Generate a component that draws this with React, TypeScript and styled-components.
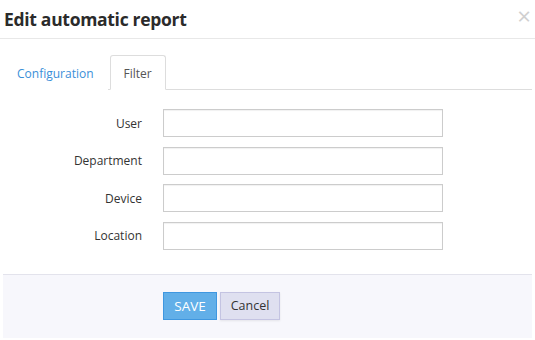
import styled, { createGlobalStyle } from "styled-components";

const FIELDS = ["User", "Department", "Device", "Location"];

const GlobalStyle = createGlobalStyle`
    body {
        margin: 0;
        background: #fff;
        font-family: "Open Sans", "Noto Sans", sans-serif;
        color: #333;
    }
`;

const App = () => {
    return (
        <Modal>
            <GlobalStyle />
            <Header>
                <Title>Edit automatic report</Title>
                <Close>×</Close>
            </Header>

            <Body>
                <TabBar>
                    <Tab>Configuration</Tab>
                    <Tab active>Filter</Tab>
                </TabBar>

                <Form>
                    {FIELDS.map((name) => (
                        <Row key={name}>
                            <Label>{name}</Label>
                            <Input type="text" />
                        </Row>
                    ))}
                </Form>

                <Footer>
                    <SaveButton>SAVE</SaveButton>
                    <CancelButton>Cancel</CancelButton>
                </Footer>
            </Body>
        </Modal>
    );
};

const Modal = styled.div`
    width: 535px;
    height: 340px;
    background: #fff;
`;
const Header = styled.header`
    height: 38px;
    display: flex;
    align-items: center;
    justify-content: space-between;
    padding: 0 4px 0 4px;
    border-bottom: 1px solid #e8e8e8;
`;
const Title = styled.h4`
    margin: 0;
    font-size: 17.5px;
    font-weight: 700;
    color: #2b2b2b;
    letter-spacing: -0.3px;
`;
const Close = styled.span`
    font-size: 24px;
    color: #d0d0d0;
    line-height: 1;
    margin-top: -7px;
`;
const Body = styled.div`
    padding: 0 3px;
`;
const TabBar = styled.nav`
    margin-top: 15px;
    height: 35px;
    display: flex;
    align-items: flex-end;
    border-bottom: 1px solid #ddd;
`;
const Tab = styled.div<{ active?: boolean }>`
    height: 35px;
    box-sizing: border-box;
    display: flex;
    align-items: center;
    padding: 2px 13px 0;
    margin-right: 2px;
    margin-bottom: -1px;
    font-size: 12px;
    color: ${(props) => (props.active ? "#555" : "#3a8fd8")};
    background: #fff;
    border: 1px solid ${(props) => (props.active ? "#ddd" : "transparent")};
    border-bottom-color: ${(props) => (props.active ? "#fff" : "transparent")};
    border-radius: 3px 3px 0 0;
`;
const Form = styled.div`
    margin-top: 19px;
    display: flex;
    flex-direction: column;
    gap: 9.6px;
`;
const Row = styled.div`
    display: flex;
    align-items: center;
`;
const Label = styled.label`
    width: 139px;
    margin-right: 21px;
    text-align: right;
    font-size: 12px;
    color: #333;
`;
const Input = styled.input`
    width: 280px;
    height: 28px;
    box-sizing: border-box;
    border: 1px solid #ccc;
    box-shadow: inset 0 1px 1px rgba(0, 0, 0, 0.06);
    outline: none;
    padding: 0 6px;
`;
const Footer = styled.footer`
    margin-top: 24px;
    height: 64px;
    box-sizing: border-box;
    padding: 17px 0 0 160px;
    display: flex;
    align-items: flex-start;
    gap: 3px;
    background: #f7f7fc;
    border-top: 1px solid #e3e3ec;
`;
const SaveButton = styled.button`
    width: 54px;
    height: 28px;
    box-sizing: border-box;
    border: 1px solid #3f97e0;
    background: #62afe8;
    color: #fff;
    font-family: inherit;
    font-size: 13.5px;
    padding: 0;
`;
const CancelButton = styled.button`
    width: 60px;
    height: 28px;
    box-sizing: border-box;
    border: 1px solid #c4c4e2;
    background: #dfe0f0;
    color: #333;
    font-family: inherit;
    font-size: 12.5px;
    padding: 0;
    box-shadow: 0 1px 2px rgba(0, 0, 0, 0.08);
`;

export default App;
